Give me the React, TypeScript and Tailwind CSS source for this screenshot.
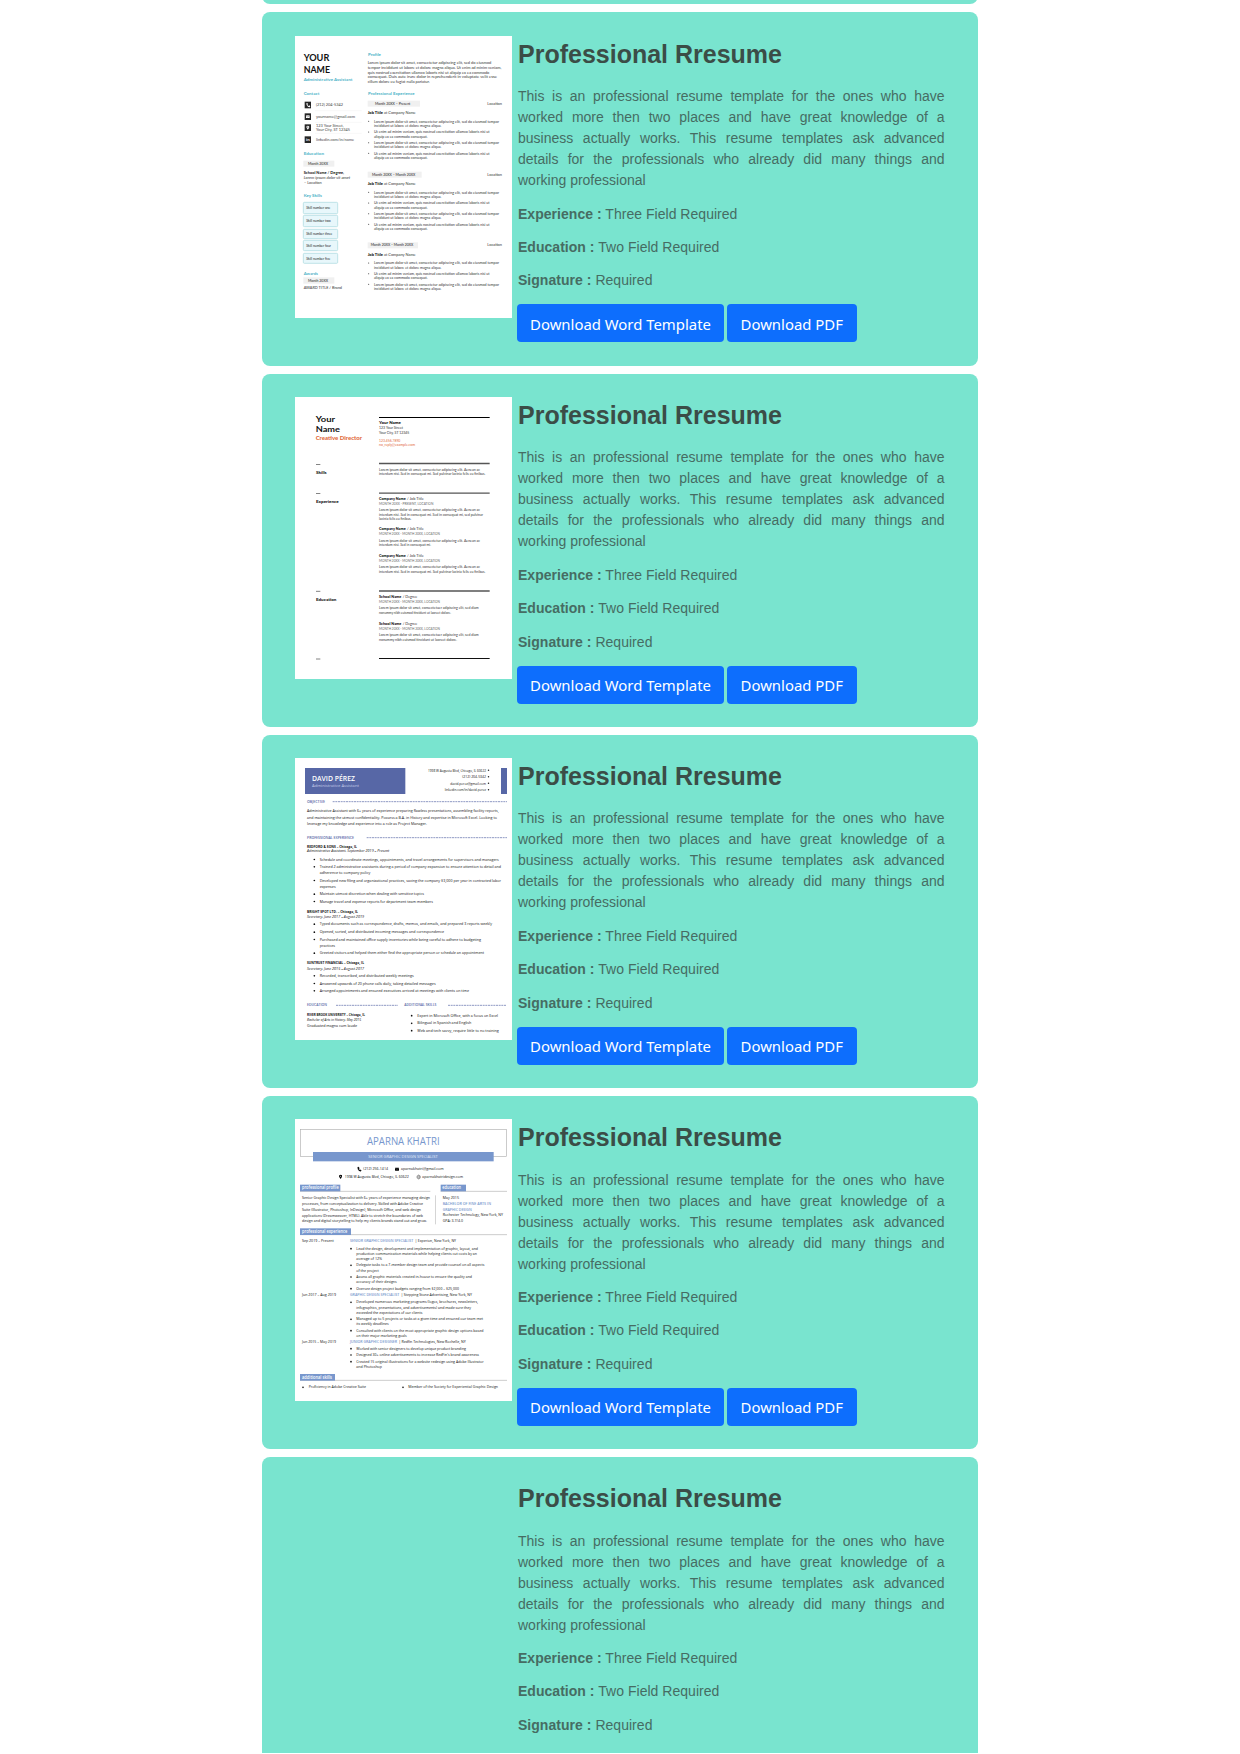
import React from "react";

type TProps = {
  x: number;
  y: number;
  w: number;
  s?: number;
  c?: string;
  b?: boolean | number;
  i?: boolean;
  children: string;
};

/* One line of thumbnail text, fitted to a width. */
function T({ x, y, w, s = 11, c = "#333", b, i, children }: TProps) {
  return (
    <text
      x={x}
      y={y}
      textLength={w}
      lengthAdjust="spacingAndGlyphs"
      fontSize={s < 13 ? s * 1.07 : s}
      fill={c}
      fontWeight={b === true ? 700 : b || 400}
      fontStyle={i ? "italic" : "normal"}
    >
      {children}
    </text>
  );
}

function Sheet({ box, className, children }: { box: string; className: string; children: React.ReactNode }) {
  return (
    <svg viewBox={box} preserveAspectRatio="none" className={`h-[282px] w-[217px] shrink-0 bg-white ${className}`}>
      {children}
    </svg>
  );
}

const LOREM: [string, string, number, number][] = [
  ["Lorem ipsum dolor sit amet, consectetur adipiscing elit, sed do eiusmod tempor", "incididunt ut labore et dolore magna aliqua.", 375, 202],
  ["Ut enim ad minim veniam, quis nostrud exercitation ullamco laboris nisi ut", "aliquip ex ea commodo consequat.", 347, 161],
];

function AssistantSheet() {
  const teal = "#4db3c8";
  const jobs = [
    { y: 314, date: "Month 20XX – Present", bw: 157, dx: 360, dw: 106, n: 4 },
    { y: 527, date: "Month 20XX – Month 20XX", bw: 162, dx: 351, dw: 130, n: 4 },
    { y: 739, date: "Month 20XX – Month 20XX", bw: 151, dx: 347, dw: 128, n: 3 },
  ];
  const contacts: [number, string, number][] = [
    [318, "(212) 204-5342", 81],
    [353, "yourname@gmail.com", 117],
    [422, "linkedin.com/in/name", 114],
  ];
  const skills: [number, number, string, number][] = [
    [607, 34, "Skill number one", 72],
    [646, 34, "Skill number two", 73],
    [688, 28, "Skill number three", 78],
    [721, 31, "Skill number four", 74],
    [760, 30, "Skill number five", 72],
  ];
  return (
    <Sheet box="120 108 651 846" className="font-[Lato,sans-serif]">
      <T x={146} y={182} w={77} s={27} c="#111" b>YOUR</T>
      <T x={146} y={219} w={79} s={27} c="#111" b>NAME</T>
      <T x={146} y={242} w={146} s={12} c={teal} b>Administrative Assistant</T>
      <T x={146} y={284} w={47} s={13} c={teal} b>Contact</T>
      {[305, 340, 373, 409].map((y) => (
        <rect key={y} x="149" y={y} width="19" height="20" fill="#262626" />
      ))}
      <path d="M154 310l3-1 2 4-2 1q1 3 4 4l2-2 3 3-2 3q-9-1-10-12z" fill="#fff" />
      <path d="M153 346h11v8h-11z" fill="#fff" />
      <path d="M153 347l5.500 4 5.500-4" fill="none" stroke="#262626" />
      <path d="M158.500 389q-6-6-4-10 4-4 8 0 2 4-4 10z" fill="#fff" />
      <circle cx="158.500" cy="381" r="1.800" fill="#262626" />
      <T x={153} y={423} w={11} s={12} c="#fff" b>in</T>
      {contacts.map(([y, t, w]) => <T key={t} x={183} y={y} w={w} s={12} c="#444">{t}</T>)}
      <T x={183} y={380} w={83} s={12} c="#444">123 Your Street,</T>
      <T x={183} y={394} w={102} s={12} c="#444">Your City, ST 12345</T>
      {[332, 367, 400].map((y) => <path key={y} d={`M180 ${y}H320`} stroke="#f0f0f0" strokeWidth="1.500" />)}
      <T x={146} y={464} w={61} s={13} c={teal} b>Education</T>
      <rect x="145" y="482" width="93" height="18" fill="#f0f0f0" />
      <T x={159} y={494} w={60} s={11} c="#222">Month 20XX</T>
      <T x={146} y={521} w={121} s={12} c="#111" b>School Name / Degree,</T>
      <T x={146} y={537} w={140} s={11.500} i>Lorem ipsum dolor sit amet</T>
      <T x={147} y={552} w={53} s={11.500}>– Location</T>
      <T x={146} y={592} w={55} s={13} c={teal} b>Key Skills</T>
      {skills.map(([y, h, t, w]) => (
        <g key={t}>
          <rect x="145" y={y} width="103" height={h} rx="3" fill="#e8f7fb" stroke="#a6d8dc" strokeWidth="2" />
          <T x={154} y={y + h / 2 + 4} w={w} s={10.500} c="#222">{t}</T>
        </g>
      ))}
      <T x={146} y={824} w={43} s={13} c={teal} b>Awards</T>
      <rect x="145" y="832" width="93" height="19" fill="#f0f0f0" />
      <T x={159} y={845} w={60} s={11} c="#222">Month 20XX</T>
      <T x={146} y={868} w={115} s={12}>AWARD TITLE / Brand</T>

      <T x={339} y={168} w={39} s={13} c={teal} b>Profile</T>
      <T x={338} y={193} w={371} s={12}>Lorem ipsum dolor sit amet, consectetur adipiscing elit, sed do eiusmod</T>
      <T x={338} y={207} w={401} s={12}>tempor incididunt ut labore et dolore magna aliqua. Ut enim ad minim veniam,</T>
      <T x={338} y={221} w={365} s={12}>quis nostrud exercitation ullamco laboris nisi ut aliquip ex ea commodo</T>
      <T x={338} y={235} w={388} s={12}>consequat. Duis aute irure dolor in reprehenderit in voluptate velit esse</T>
      <T x={338} y={249} w={186} s={12}>cillum dolore eu fugiat nulla pariatur.</T>
      <T x={339} y={284} w={140} s={13} c={teal} b>Professional Experience</T>
      {jobs.map((j) => (
        <g key={j.y}>
          <rect x="338" y={j.y - 12} width={j.bw} height="18" fill="#f0f0f0" />
          <T x={j.dx} y={j.y} w={j.dw} s={11} c="#222">{j.date}</T>
          <T x={697} y={j.y} w={44} s={12}>Location</T>
          <T x={338} y={j.y + 28} w={46} s={12.500} c="#111" b={900}>Job Title</T>
          <T x={387} y={j.y + 28} w={95} s={12}>at Company Name</T>
          {Array.from({ length: j.n }, (_, k) => {
            const l = LOREM[k % 2];
            const y = j.y + 54 + k * 32;
            return (
              <g key={k}>
                <circle cx="341" cy={y - 4} r="1.600" fill="#333" />
                <T x={357} y={y} w={l[2]} s={11.500}>{l[0]}</T>
                <T x={357} y={y + 12.500} w={l[3]} s={11.500}>{l[1]}</T>
              </g>
            );
          })}
        </g>
      ))}
    </Sheet>
  );
}

function DirectorSheet() {
  const A = "Lorem ipsum dolor sit amet, consectetur adipiscing elit. Aenean ac";
  const B = "interdum nisi. Sed in consequat mi. Sed pulvinar lacinia felis eu finibus.";
  const D = "Lorem ipsum dolor sit amet, consectetuer adipiscing elit, sed diam";
  const E = "nonummy nibh euismod tincidunt ut laoreet dolore.";
  const jobs: [number, string, string, number, string, string, number][] = [
    [360, "Company Name", "/ Job Title", 80, "MONTH 20XX - PRESENT, LOCATION", A, 303],
    [451, "Company Name", "/ Job Title", 80, "MONTH 20XX - MONTH 20XX, LOCATION", A, 303],
    [531, "Company Name", "/ Job Title", 80, "MONTH 20XX - MONTH 20XX, LOCATION", A, 303],
    [654, "School Name", "/ Degree", 67, "MONTH 20XX - MONTH 20XX, LOCATION", D, 299],
    [735, "School Name", "/ Degree", 67, "MONTH 20XX - MONTH 20XX, LOCATION", D, 299],
  ];
  return (
    <Sheet box="120 51 651 846" className="font-[Lato,sans-serif]">
      <T x={182} y={125} w={58} s={25} c="#111" b>Your</T>
      <T x={182} y={155} w={73} s={25} c="#111" b>Name</T>
      <T x={182} y={180} w={139} s={17} c="#df6a3c" b={900}>Creative Director</T>
      <path d="M372 112.500H704" stroke="#000" strokeWidth="3.500" />
      <path d="M372 250.500H704M372 339.500H704M372 633H704" stroke="#555" strokeWidth="4" />
      <path d="M372 835.500H704" stroke="#111" strokeWidth="3" />
      <path d="M183 253.500h13M183 340.500h13M183 634h13M183 837h13" stroke="#444" strokeWidth="2" />
      <T x={183} y={282} w={32} s={12} c="#111" b={900}>Skills</T>
      <T x={183} y={369} w={68} s={12} c="#111" b={900}>Experience</T>
      <T x={183} y={663} w={61} s={12} c="#111" b={900}>Education</T>
      <T x={372} y={132} w={66} s={13} c="#111" b={900}>Your Name</T>
      <T x={372} y={148} w={72} s={11.500}>123 Your Street</T>
      <T x={372} y={161} w={91} s={11.500}>Your City, ST 12345</T>
      <T x={372} y={185} w={64} s={11.500} c="#df6a3c">123.456.7890</T>
      <T x={372} y={198} w={108} s={11.500} c="#df6a3c">no_reply@example.com</T>
      <T x={372} y={272} w={303} s={11.500}>{A}</T>
      <T x={372} y={286} w={319} s={11.500}>{B}</T>
      {jobs.map(([y, n, r, nw, d, l, lw]) => (
        <g key={y}>
          <T x={372} y={y} w={nw} s={12} c="#111" b={900}>{n}</T>
          <T x={374 + nw + 2} y={y} w={n === "Company Name" ? 50 : 44} s={12}>{r}</T>
          <T x={372} y={y + 14} w={y === 360 ? 163 : 183} s={10} c="#666">{d}</T>
          <T x={372} y={y + 34} w={lw} s={11.500}>{l}</T>
        </g>
      ))}
      <T x={372} y={407} w={312} s={11.500}>interdum nisi. Sed in consequat mi. Sed in consequat mi, sed pulvinar</T>
      <T x={372} y={420} w={97} s={11.500}>lacinia felis eu finibus.</T>
      <T x={372} y={498} w={156} s={11.500}>interdum nisi. Sed in consequat mi.</T>
      <T x={372} y={579} w={319} s={11.500}>{B}</T>
      <T x={372} y={702} w={216} s={11.500}>{E}</T>
      <T x={372} y={782} w={234} s={11.500}>{E}</T>
    </Sheet>
  );
}

function PerezSheet() {
  const navy = "#5767a6";
  const bullets: [number, number, string, boolean][] = [
    [332, 537, "Schedule and coordinate meetings, appointments, and travel arrangements for supervisors and managers", true],
    [354, 544, "Trained 2 administrative assistants during a period of company expansion to ensure attention to detail and", true],
    [372, 152, "adherence to company policy", false],
    [395, 544, "Developed new filing and organizational practices, saving the company $3,000 per year in contracted labor", true],
    [413, 48, "expenses", false],
    [436, 313, "Maintain utmost discretion when dealing with sensitive topics", true],
    [458, 340, "Manage travel and expense reports for department team members", true],
    [526, 517, "Typed documents such as correspondence, drafts, memos, and emails, and prepared 3 reports weekly", true],
    [550, 373, "Opened, sorted, and distributed incoming messages and correspondence", true],
    [572, 484, "Purchased and maintained office supply inventories while being careful to adhere to budgeting", true],
    [590, 46, "practices", false],
    [613, 493, "Greeted visitors and helped them either find the appropriate person or schedule an appointment", true],
    [681, 282, "Recorded, transcribed, and distributed weekly meetings", true],
    [704, 348, "Answered upwards of 20 phone calls daily, taking detailed messages", true],
    [726, 448, "Arranged appointments and ensured executives arrived at meetings with clients on time", true],
  ];
  const contact: [number, number, string][] = [
    [65, 174, "1998 W Augusta Blvd, Chicago, IL 60622"],
    [84, 71, "(212) 204-5342"],
    [104, 107, "david.perez@gmail.com"],
    [123, 124, "linkedin.com/in/david-perez"],
  ];
  return (
    <Sheet box="30 24 651 846" className="font-['Open_Sans',sans-serif]">
      <rect x="60" y="54" width="301" height="78" fill={navy} />
      <rect x="648" y="54" width="18" height="78" fill={navy} />
      <T x={81} y={94} w={129} s={20} c="#fff" b={600}>DAVID PÉREZ</T>
      <T x={81} y={112} w={141} s={11} c="#c3cae6">Administrative Assistant</T>
      {contact.map(([y, w, t]) => (
        <g key={t}>
          <T x={603 - w} y={y} w={w} s={10} c="#111">{t}</T>
          <circle cx="610.500" cy={y - 4} r="2.200" fill="#222" />
        </g>
      ))}
      <g stroke={navy} strokeWidth="2" strokeDasharray="6 2">
        <path d="M143 155H666M245 263H666M153 766H339M489 766H664" />
      </g>
      <T x={66} y={158} w={54} s={10} c={navy} b={600}>OBJECTIVE</T>
      <T x={66} y={187} w={575} c="#111">Administrative Assistant with 6+ years of experience preparing flawless presentations, assembling facility reports,</T>
      <T x={66} y={206} w={570} c="#111">and maintaining the utmost confidentiality. Possess a B.A. in History and expertise in Microsoft Excel. Looking to</T>
      <T x={66} y={224} w={360} c="#111">leverage my knowledge and experience into a role as Project Manager.</T>
      <T x={66} y={266} w={141} s={10} c={navy} b={600}>PROFESSIONAL EXPERIENCE</T>
      <T x={66} y={293} w={150} s={10} c="#111" b>REDFORD &amp; SONS – Chicago, IL</T>
      <T x={66} y={307} w={247} s={10.500} c="#111" i>Administrative Assistant, September 2019 – Present</T>
      <T x={66} y={489} w={153} s={10} c="#111" b>BRIGHT SPOT LTD. – Chicago, IL</T>
      <T x={66} y={504} w={171} s={10.500} c="#111" i>Secretary, June 2017 – August 2019</T>
      <T x={66} y={643} w={171} s={10} c="#111" b>SUNTRUST FINANCIAL – Chicago, IL</T>
      <T x={66} y={659} w={171} s={10.500} c="#111" i>Secretary, June 2015 – August 2017</T>
      {bullets.map(([y, w, t, dot]) => (
        <g key={t}>
          {dot && <circle cx="88" cy={y - 3.500} r="2.500" fill="#111" />}
          <T x={104} y={y} w={w} s={10.500} c="#111">{t}</T>
        </g>
      ))}
      <T x={66} y={769} w={60} s={10} c={navy} b={600}>EDUCATION</T>
      <T x={358} y={769} w={96} s={10} c={navy} b={600}>ADDITIONAL SKILLS</T>
      <T x={66} y={797} w={174} s={9.500} c="#111" b>RIVER BROOK UNIVERSITY – Chicago, IL</T>
      <T x={66} y={812} w={162} s={10} c="#111" i>Bachelor of Arts in History, May 2015</T>
      <T x={66} y={830} w={150} s={10.500} c="#111">Graduated magna cum laude</T>
      {([[800, 242, "Expert in Microsoft Office, with a focus on Excel"], [823, 162, "Bilingual in Spanish and English"], [845, 244, "Web and tech savvy, require little to no training"]] as [number, number, string][]).map(([y, w, t]) => (
        <g key={t}>
          <circle cx="380" cy={y - 3} r="2.500" fill="#111" />
          <T x={397} y={y} w={w} s={10.500} c="#111">{t}</T>
        </g>
      ))}
    </Sheet>
  );
}

function KhatriSheet() {
  const blue = "#7897cd";
  const rows: [number, number, string, boolean][] = [
    [419, 365, "Lead the design, development and implementation of graphic, layout, and", true],
    [435, 362, "production communication materials while helping clients cut costs by an", false],
    [450, 77, "average of 12%", false],
    [469, 384, "Delegate tasks to a 7-member design team and provide counsel on all aspects", true],
    [485, 67, "of the project", false],
    [504, 347, "Assess all graphic materials created in-house to ensure the quality and", true],
    [520, 121, "accuracy of their designs", false],
    [539, 308, "Oversee design project budgets ranging from $2,000 – $25,000", true],
    [580, 365, "Developed numerous marketing programs (logos, brochures, newsletters,", true],
    [596, 344, "infographics, presentations, and advertisements) and made sure they", false],
    [611, 198, "exceeded the expectations of our clients", false],
    [631, 380, "Managed up to 5 projects or tasks at a given time and ensured our team met", true],
    [646, 97, "its weekly deadlines", false],
    [665, 381, "Consulted with clients on the most appropriate graphic design options based", true],
    [681, 151, "on their major marketing goals", false],
    [719, 329, "Worked with senior designers to develop unique product branding", true],
    [738, 368, "Designed 30+ online advertisements to increase RedFin's brand awareness", true],
    [758, 382, "Created 15 original illustrations for a website redesign using Adobe Illustrator", true],
    [773, 77, "and Photoshop", false],
  ];
  const jobs: [number, string, number, string, number, string, number][] = [
    [397, "Sep 2019 – Present", 95, "SENIOR GRAPHIC DESIGN SPECIALIST", 190, "| Experion, New York, NY", 123],
    [558, "Jun 2017 – Aug 2019", 102, "GRAPHIC DESIGN SPECIALIST", 148, "| Stepping Stone Advertising, New York, NY", 213],
    [700, "Jun 2015 – May 2019", 102, "JUNIOR GRAPHIC DESIGNER", 141, "| Redfin Technologies, New Rochelle, NY", 201],
  ];
  const profile: [string, number][] = [
    ["Senior Graphic Design Specialist with 6+ years of experience managing design", 384],
    ["processes, from conceptualization to delivery. Skilled with Adobe Creative", 363],
    ["Suite (Illustrator, Photoshop, InDesign), Microsoft Office, and web design", 357],
    ["applications (Dreamweaver, HTML). Able to stretch the boundaries of web", 363],
    ["design and digital storytelling to help my clients brands stand out and grow.", 375],
  ];
  return (
    <Sheet box="30 27 651 846" className="font-['Open_Sans',sans-serif]">
      <rect x="46" y="58" width="619" height="82" fill="none" stroke="#aaa" strokeWidth="1.800" />
      <rect x="84" y="126" width="542" height="28" fill={blue} />
      <T x={246} y={104} w={218} s={35} c={blue} b={400}>APARNA KHATRI</T>
      <T x={250} y={144} w={208} s={12} c="#e3ecfb">SENIOR GRAPHIC DESIGN SPECIALIST</T>
      <path d="M218 172l3-1 2 4-2 2q1 3 3 3l2-1 3 3-2 2q-9-1-9-12z" fill="#000" stroke="#000" />
      <T x={235} y={181} w={74} s={10.500} c="#111">(212) 256-1414</T>
      <rect x="330" y="173" width="12" height="9" rx="1" fill="#000" />
      <path d="M330 175l6 3 6-3" fill="none" stroke="#fff" strokeWidth=".7" />
      <T x={348} y={181} w={128} s={10.500} c="#111">aparnakhatri@gmail.com</T>
      <path d="M167 207q-7-8-4-11 4-3 8 0 2 4-4 11z" fill="#000" />
      <circle cx="167" cy="199" r="1.500" fill="#fff" />
      <T x={179} y={205} w={192} s={10.500} c="#111">1998 W Augusta Blvd, Chicago, IL 60622</T>
      <g fill="none" stroke="#333">
        <circle cx="401" cy="201" r="5.500" />
        <ellipse cx="401" cy="201" rx="2.500" ry="5.500" />
        <path d="M395.500 201h11" />
      </g>
      <T x={412} y={205} w={122} s={10.500} c="#111">aparnakhatridesign.com</T>
      <path d="M45 244H436M467 244H666M45 374H666M45 811H666" stroke="#999" strokeWidth="1.500" />
      <path d="M451.500 256V343" stroke="#aaa" strokeWidth="1.500" />
      <g fill={blue}>
        <rect x="45" y="224" width="121" height="20" />
        <rect x="467" y="224" width="76" height="20" />
        <rect x="45" y="355" width="153" height="20" />
        <rect x="45" y="792" width="105" height="20" />
      </g>
      <T x={51} y={238} w={110} s={13} c="#fff" b={600}>professional profile</T>
      <T x={472} y={238} w={56} s={13} c="#fff" b={600}>education</T>
      <T x={51} y={369} w={136} s={13} c="#fff" b={600}>professional experience</T>
      <T x={51} y={807} w={90} s={13} c="#fff" b={600}>additional skills</T>
      {profile.map(([t, w], k) => <T key={t} x={51} y={267 + k * 17.600} w={w} s={10.500} c="#111">{t}</T>)}
      <T x={473} y={267} w={49} s={10.500} c="#111">May 2015</T>
      <T x={473} y={284} w={145} s={10.500} c={blue} b={600}>BACHELOR OF FINE ARTS IN</T>
      <T x={473} y={302} w={87} s={10.500} c={blue} b={600}>GRAPHIC DESIGN</T>
      <T x={473} y={319} w={181} s={10.500} c="#111">Rochester Technology, New York, NY</T>
      <T x={473} y={337} w={61} s={10.500} c="#111">GPA: 3.7/4.0</T>
      {jobs.map(([y, d, dw, r, rw, p, pw]) => (
        <g key={y}>
          <T x={51} y={y} w={dw} s={10.500} c="#111">{d}</T>
          <T x={195} y={y} w={rw} s={10.500} c={blue} b={600}>{r}</T>
          <T x={195 + rw + 5} y={y} w={pw} s={10.500} c="#111">{p}</T>
        </g>
      ))}
      {rows.map(([y, w, t, dot]) => (
        <g key={t}>
          {dot && <circle cx="198" cy={y - 3} r="2.500" fill="#111" />}
          <T x={214} y={y} w={w} s={10.500} c="#111">{t}</T>
        </g>
      ))}
      <circle cx="54" cy="832" r="2.500" fill="#111" />
      <T x={71} y={835} w={172} s={10.500} c="#111">Proficiency in Adobe Creative Suite</T>
      <circle cx="354" cy="832" r="2.500" fill="#111" />
      <T x={370} y={835} w={269} s={10.500} c="#111">Member of the Society for Experiential Graphic Design</T>
    </Sheet>
  );
}

const FIELDS = [
  ["Experience", "Three Field Required"],
  ["Education", "Two Field Required"],
  ["Signature", "Required"],
];

function ResumeCard({ thumb, downloads = true }: { thumb?: React.ReactNode; downloads?: boolean }) {
  return (
    <article className="mb-2 flex h-[353.1px] shrink-0 rounded-lg bg-[#79e4cf] pl-[33px] pt-[23.6px]">
      <div className="w-[223px] shrink-0">{thumb}</div>
      <div className="w-[426.500px] font-['Liberation_Sans',sans-serif] text-sm leading-[21px] text-[#466c63]">
        <h2 className="mb-[17.800px] mt-[2.5px] text-[25px] font-bold leading-[30px] text-[#3b4d47]">Professional Rresume</h2>
        <p className="mb-[12.4px] text-justify">
          This is an professional resume template for the ones who have worked more then two places and have great
          knowledge of a business actually works. This resume templates ask advanced details for the professionals who
          already did many things and working professional
        </p>
        {FIELDS.map(([label, value]) => (
          <p key={label} className="mb-[12.4px] tracking-[0.03px]">
            <b>{label} :</b> {value}
          </p>
        ))}
        {downloads && (
          <div className="-ml-px flex gap-[3px] pt-[0.6px] font-['Noto_Sans',sans-serif] text-[14.9px] leading-6 text-white">
            <button className="h-[38px] w-[207px] whitespace-nowrap rounded bg-[#0d6efd] pt-px text-center">Download Word Template</button>
            <button className="h-[38px] w-[129.500px] whitespace-nowrap rounded bg-[#0d6efd] pt-px text-center">Download PDF</button>
          </div>
        )}
      </div>
    </article>
  );
}

export default function App() {
  return (
    <main className="h-[1753px] overflow-hidden bg-white">
      <div className="ml-[262px] flex w-[716px] flex-col">
        <div className="-mt-[15.6px] mb-2 h-5 shrink-0 rounded-lg bg-[#79e4cf]" />
        <ResumeCard thumb={<AssistantSheet />} />
        <ResumeCard thumb={<DirectorSheet />} />
        <ResumeCard thumb={<PerezSheet />} />
        <ResumeCard thumb={<KhatriSheet />} />
        <ResumeCard downloads={false} />
      </div>
    </main>
  );
}
